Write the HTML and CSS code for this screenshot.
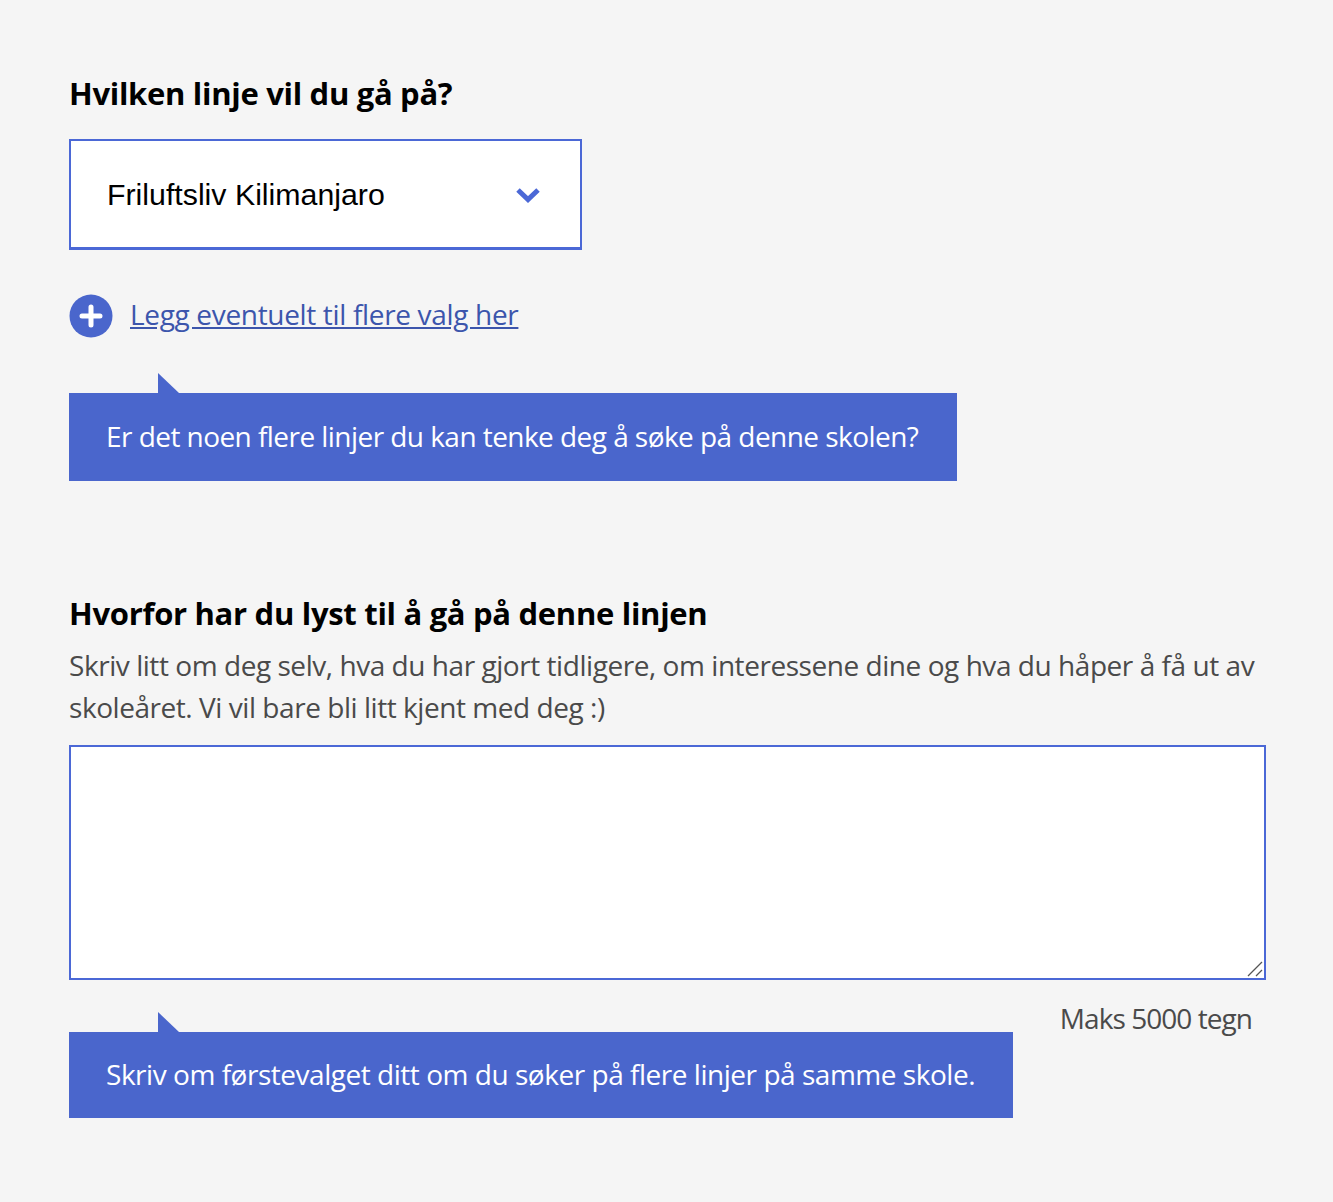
FILE: index.html
```html
<!DOCTYPE html>
<html lang="no">
<head>
    <meta charset="UTF-8">
    <title>Søknad</title>
    <link rel="stylesheet" href="styles.css">
</head>
<body>
    <div class="form">
        <h2 class="title">Hvilken linje vil du gå på?</h2>
        <div class="select">
            <span>Friluftsliv Kilimanjaro</span>
            <svg class="chevron" width="26" height="18" viewBox="0 0 26 18"><path d="M3 5 L13 14.5 L23 5" fill="none" stroke="#4b68d6" stroke-width="5"/></svg>
        </div>
        <div class="add">
            <svg class="plus" width="44" height="44" viewBox="0 0 44 44"><circle cx="22" cy="22" r="21.5" fill="#4a66cc"/><path d="M22 13 V31 M13 22 H31" stroke="#fff" stroke-width="5" stroke-linecap="round"/></svg>
            <a href="#">Legg eventuelt til flere valg her</a>
        </div>
        <div class="hint first">Er det noen flere linjer du kan tenke deg å søke på denne skolen?</div>

        <h2 class="title second">Hvorfor har du lyst til å gå på denne linjen</h2>
        <p class="desc">Skriv litt om deg selv, hva du har gjort tidligere, om interessene dine og hva du håper å få ut av skoleåret. Vi vil bare bli litt kjent med deg :)</p>
        <div class="text-wrap">
            <textarea class="text"></textarea>
            <svg class="grip" width="16" height="16" viewBox="0 0 16 16"><path d="M1 15 L15 1 M9 15 L15 9" stroke="#555" stroke-width="1.3" fill="none"/></svg>
        </div>
        <div class="bottom">
            <div class="hint last">Skriv om førstevalget ditt om du søker på flere linjer på samme skole.</div>
            <span class="max">Maks 5000 tegn</span>
        </div>
    </div>
</body>
</html>
```

FILE: styles.css
```css
body {
	margin: 0;
	background: #f5f5f5;
	font-family: "Open Sans", "Noto Sans", sans-serif;
	color: #000;
}

.form {
	padding: 73px 67px 83px 69px;
}

.title {
	margin: 0;
	font-size: 31px;
	line-height: 40px;
	font-weight: 700;
	letter-spacing: -0.3px;
}

.second {
	margin-top: 112px;
}

.select {
	box-sizing: border-box;
	width: 513px;
	height: 111px;
	margin-top: 26px;
	padding: 2px 39px 0 36px;
	display: flex;
	align-items: center;
	justify-content: space-between;
	background: #fff;
	border: 2px solid #4b68d6;
	border-bottom-width: 3px;
	font-family: "Liberation Sans", sans-serif;
	font-size: 30.3px;
}

.chevron {
	margin-top: -2px;
}

.add {
	display: flex;
	align-items: center;
	gap: 17px;
	margin-top: 44px;
}

.add a {
	margin-bottom: 4px;
	color: #3c55ac;
	font-size: 28px;
	letter-spacing: -0.33px;
}

.hint {
	position: relative;
	box-sizing: border-box;
	display: flex;
	align-items: center;
	padding: 0 0 2px 37px;
	background: #4a66cc;
	color: #fff;
	font-size: 28px;
	letter-spacing: -0.5px;
}

.hint::before {
	content: "";
	position: absolute;
	left: 89px;
	top: -20px;
	border-left: 21px solid #4a66cc;
	border-top: 20px solid transparent;
}

.first {
	width: 888px;
	height: 88px;
	margin-top: 55px;
	letter-spacing: -0.55px;
}

.desc {
	margin: 11px 0 0;
	font-size: 28px;
	line-height: 42px;
	letter-spacing: -0.45px;
	color: #4a4a4a;
}

.text-wrap {
	position: relative;
	width: 1197px;
	margin-top: 17px;
}

.text {
	display: block;
	box-sizing: border-box;
	width: 100%;
	height: 235px;
	background: #fff;
	border: 2px solid #4b68d6;
	border-radius: 0;
	resize: none;
}

.grip {
	position: absolute;
	right: 3px;
	bottom: 3px;
}

.bottom {
	display: flex;
	justify-content: space-between;
	align-items: flex-start;
	margin-top: 52px;
	padding-right: 14px;
}

.last {
	width: 944px;
	height: 86px;
	letter-spacing: -0.47px;
}

.max {
	margin-top: -33px;
	font-size: 28px;
	letter-spacing: -0.95px;
	color: #4a4a4a;
}
```
